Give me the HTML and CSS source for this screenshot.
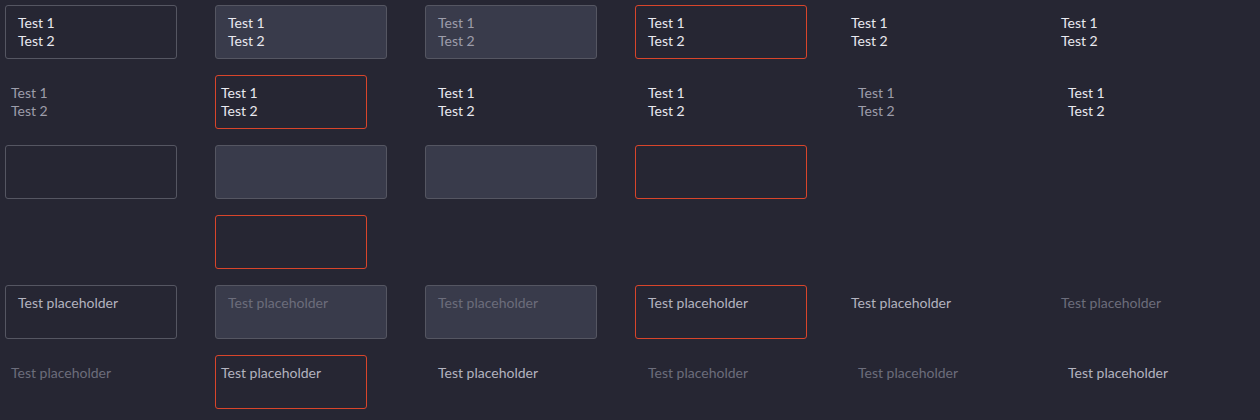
FILE: index.html
```html
<!DOCTYPE html>
<html>
<head>
<meta charset="utf-8">
<link rel="stylesheet" href="styles.css">
</head>
<body>
<div class="grid">
  <div class="cell field"><div class="t">Test 1</div><div class="t">Test 2</div></div>
  <div class="cell field filled"><div class="t">Test 1</div><div class="t">Test 2</div></div>
  <div class="cell field filled dim"><div class="t">Test 1</div><div class="t">Test 2</div></div>
  <div class="cell field error"><div class="t">Test 1</div><div class="t">Test 2</div></div>
  <div class="cell plain"><div class="t">Test 1</div><div class="t">Test 2</div></div>
  <div class="cell plain"><div class="t">Test 1</div><div class="t">Test 2</div></div>

  <div class="cell plain dim"><div class="t">Test 1</div><div class="t">Test 2</div></div>
  <div class="cell small error"><div class="t">Test 1</div><div class="t">Test 2</div></div>
  <div class="cell inset"><div class="t">Test 1</div><div class="t">Test 2</div></div>
  <div class="cell inset"><div class="t">Test 1</div><div class="t">Test 2</div></div>
  <div class="cell inset dim"><div class="t">Test 1</div><div class="t">Test 2</div></div>
  <div class="cell inset"><div class="t">Test 1</div><div class="t">Test 2</div></div>

  <div class="cell field"></div>
  <div class="cell field filled"></div>
  <div class="cell field filled"></div>
  <div class="cell field error"></div>
  <div class="cell empty"></div>
  <div class="cell empty"></div>

  <div class="cell empty"></div>
  <div class="cell small error"></div>
  <div class="cell empty"></div>
  <div class="cell empty"></div>
  <div class="cell empty"></div>
  <div class="cell empty"></div>

  <div class="cell field ph"><div class="t">Test placeholder</div></div>
  <div class="cell field filled ph-dim"><div class="t">Test placeholder</div></div>
  <div class="cell field filled ph-dim"><div class="t">Test placeholder</div></div>
  <div class="cell field error ph"><div class="t">Test placeholder</div></div>
  <div class="cell plain ph"><div class="t">Test placeholder</div></div>
  <div class="cell plain ph-dim"><div class="t">Test placeholder</div></div>

  <div class="cell plain ph-dim"><div class="t">Test placeholder</div></div>
  <div class="cell small error ph"><div class="t">Test placeholder</div></div>
  <div class="cell inset ph"><div class="t">Test placeholder</div></div>
  <div class="cell inset ph-dim"><div class="t">Test placeholder</div></div>
  <div class="cell inset ph-dim"><div class="t">Test placeholder</div></div>
  <div class="cell inset ph"><div class="t">Test placeholder</div></div>
</div>
</body>
</html>
```

FILE: styles.css
```css
html, body {
  margin: 0;
  background: #262633;
}
body {
  padding: 5px;
  font-family: "Lato", "Open Sans", sans-serif;
  font-size: 14px;
  line-height: 18px;
  color: #e9e9ef;
}
.grid {
  display: grid;
  grid-template-columns: repeat(6, 172px);
  grid-auto-rows: 54px;
  column-gap: 38px;
  row-gap: 16px;
}
.cell {
  box-sizing: border-box;
  height: 54px;
  width: 172px;
  white-space: nowrap;
}
.field {
  border: 1px solid #555662;
  border-radius: 3px;
  padding: 8px 12px;
}
.filled {
  background: #393b4b;
}
.error {
  border: 1px solid #d8452b;
  border-radius: 3px;
}
.small {
  width: 152px;
  padding: 8px 5px;
}
.plain {
  padding: 9px 6px;
}
.inset {
  padding: 9px 13px;
}
.dim {
  color: #9d9daa;
}
.ph {
  color: #b3b3bf;
}
.ph-dim {
  color: #6c6d7b;
}
```
